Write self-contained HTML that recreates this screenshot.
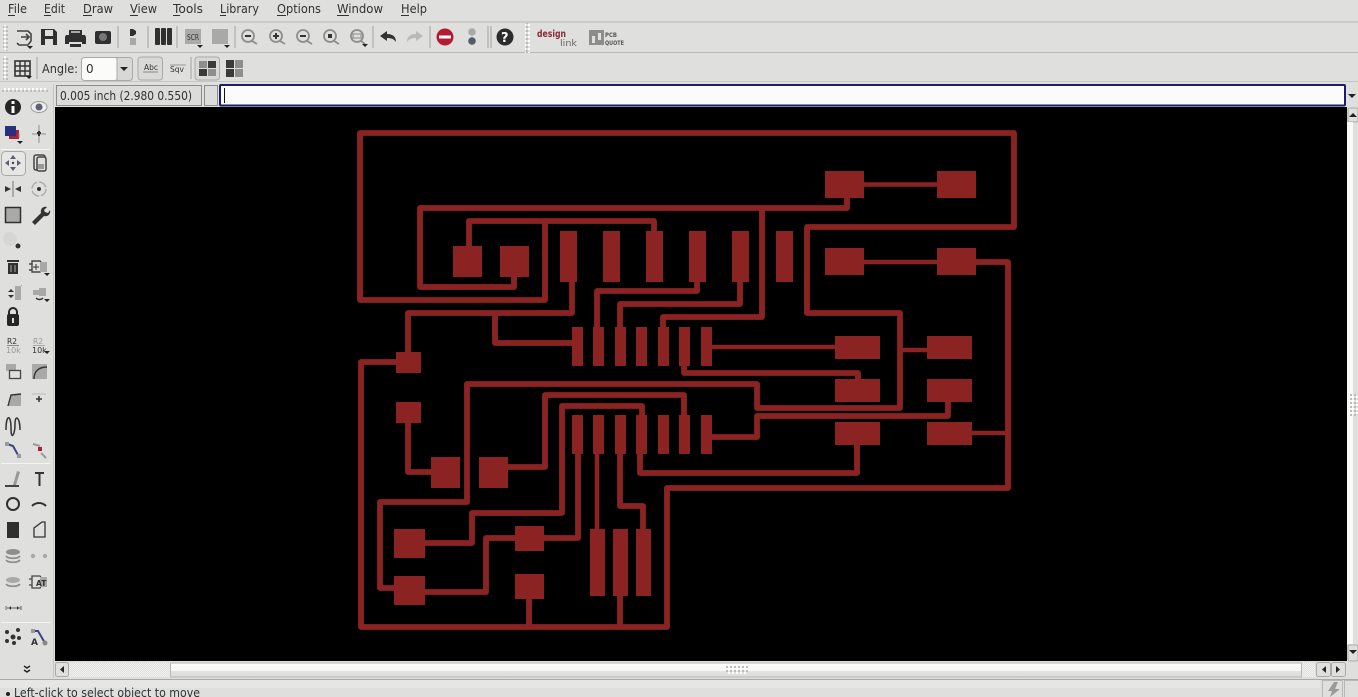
<!DOCTYPE html>
<html><head><meta charset="utf-8"><style>
html,body{margin:0;padding:0;width:1358px;height:697px;overflow:hidden;background:#dfe0de}
svg{display:block;position:absolute;left:0;top:0}
text{font-family:"DejaVu Sans",sans-serif;fill:#2f3133}
.m{font-size:12px}
.t{fill:none;stroke:#8b2323;stroke-width:5.8;stroke-linejoin:round}
.n{fill:none;stroke:#8b2323;stroke-width:4.6}
.p{fill:#8b2323}
.k{fill:#303030}
.g{fill:#a9aaa8}
.s{stroke:#b7b8b6;stroke-width:1.5}
.l{fill:none;stroke:#303030;stroke-width:2}
</style></head><body>
<svg width="1358" height="697" viewBox="0 0 1358 697" xmlns="http://www.w3.org/2000/svg">
<defs>
<pattern id="d" width="4" height="4" patternUnits="userSpaceOnUse"><rect width="2" height="2" fill="#fff"/><rect x="2" y="2" width="2" height="2" fill="#bdbebc"/></pattern>
<pattern id="e" width="2" height="2" patternUnits="userSpaceOnUse"><rect width="2" height="2" fill="#dfe0de"/><rect width="1" height="1" fill="#f2f3f1"/><rect x="1" y="1" width="1" height="1" fill="#f2f3f1"/></pattern>
<linearGradient id="sl" x1="0" y1="0" x2="0" y2="1"><stop offset="0" stop-color="#fcfdfb"/><stop offset=".55" stop-color="#f6f7f5"/><stop offset=".6" stop-color="#e2e3e1"/><stop offset="1" stop-color="#dcdddb"/></linearGradient>
</defs>
<rect width="1358" height="697" fill="#dfe0de"/>

<!-- menu -->
<g class="m">
<text x="8" y="13" class="m" textLength="19" lengthAdjust="spacingAndGlyphs">File</text><rect x="8" y="15" width="7" height="1" fill="#2f3133"/>
<text x="44" y="13" class="m" textLength="21" lengthAdjust="spacingAndGlyphs">Edit</text><rect x="44" y="15" width="7" height="1" fill="#2f3133"/>
<text x="83" y="13" class="m" textLength="30" lengthAdjust="spacingAndGlyphs">Draw</text><rect x="83" y="15" width="9" height="1" fill="#2f3133"/>
<text x="130" y="13" class="m" textLength="27" lengthAdjust="spacingAndGlyphs">View</text><rect x="130" y="15" width="8" height="1" fill="#2f3133"/>
<text x="173" y="13" class="m" textLength="30" lengthAdjust="spacingAndGlyphs">Tools</text><rect x="173" y="15" width="7" height="1" fill="#2f3133"/>
<text x="220" y="13" class="m" textLength="39" lengthAdjust="spacingAndGlyphs">Library</text><rect x="220" y="15" width="6" height="1" fill="#2f3133"/>
<text x="277" y="13" class="m" textLength="44" lengthAdjust="spacingAndGlyphs">Options</text><rect x="277" y="15" width="9" height="1" fill="#2f3133"/>
<text x="337" y="13" class="m" textLength="46" lengthAdjust="spacingAndGlyphs">Window</text><rect x="337" y="15" width="12" height="1" fill="#2f3133"/>
<text x="401" y="13" class="m" textLength="26" lengthAdjust="spacingAndGlyphs">Help</text><rect x="401" y="15" width="8" height="1" fill="#2f3133"/>
</g>

<!-- toolbars -->
<rect x="0" y="21.5" width="1358" height="1" fill="#b7b8b6"/>
<rect x="0" y="52" width="1358" height="1" fill="#b7b8b6"/>
<rect x="0" y="81" width="1358" height="1" fill="#c6c7c5"/>
<rect x="3" y="25" width="5" height="26" fill="url(#d)"/>
<rect x="3" y="56" width="5" height="24" fill="url(#d)"/>
<rect x="525" y="23" width="5" height="30" fill="url(#d)"/>
<rect x="2" y="88" width="46" height="4" fill="url(#d)"/>
<g class="s">
<line x1="118" y1="26" x2="118" y2="48"/><line x1="148" y1="26" x2="148" y2="48"/><line x1="177" y1="26" x2="177" y2="48"/><line x1="235" y1="26" x2="235" y2="48"/><line x1="373" y1="26" x2="373" y2="48"/><line x1="430" y1="26" x2="430" y2="48"/><line x1="488" y1="26" x2="488" y2="48"/><line x1="491" y1="26" x2="491" y2="48"/>
<line x1="37" y1="57" x2="37" y2="79"/><line x1="191" y1="57" x2="191" y2="79"/>
</g>

<!-- top icons -->
<path d="M17 31h11l3 3v7l-3 4H19l-2-2M21 37h8M26 34l3 3-3 3" fill="none" stroke="#444" stroke-width="1.6"/>
<path d="M27 46h6l-3 3z" fill="#222"/>
<path class="k" d="M41 29h13l3 3v13H41zM45 30v6h8v-6zM45 39v6h8v-6z"/>
<path class="k" d="M69 35v-5h13v5h3l1 2v7h-4v-2H69v2h-4v-7l1-2z"/><rect x="71" y="31" width="9" height="2" fill="#aaa"/><rect x="70" y="44" width="11" height="3" class="k"/>
<rect x="95" y="31" width="16" height="13" rx="2" class="k"/><circle cx="103" cy="37" r="4" fill="#777"/>
<path d="M130 29h3l3 2v3l-3 2h-3z" class="k"/><rect x="130" y="38" width="6" height="7" class="g"/>
<g class="k"><rect x="155" y="28" width="5" height="17" rx="1"/><rect x="161" y="28" width="5" height="17" rx="1"/><rect x="167" y="28" width="5" height="17" rx="1"/></g>
<rect x="185" y="29" width="16" height="15" class="g"/><text x="187" y="40" font-size="8" style="fill:#333" textLength="12" lengthAdjust="spacingAndGlyphs">SCR</text><path d="M197 45h6l-3 3z" fill="#222"/>
<rect x="212" y="29" width="16" height="15" class="g"/><path d="M224 45h6l-3 3z" fill="#222"/>
<g fill="none" stroke="#8d8e8c" stroke-width="1.8">
<circle cx="248" cy="36" r="6"/><line x1="252" y1="41" x2="257" y2="44"/>
<circle cx="276" cy="36" r="6"/><line x1="280" y1="41" x2="285" y2="44"/>
<circle cx="303" cy="36" r="6"/><line x1="307" y1="41" x2="312" y2="44"/>
<circle cx="330" cy="36" r="6"/><line x1="334" y1="41" x2="339" y2="44"/>
<circle cx="357" cy="36" r="6"/><line x1="361" y1="41" x2="365" y2="44"/>
</g>
<rect x="245" y="35" width="6" height="2" fill="#333"/>
<path d="M273 35h2v-2h2v2h2v2h-2v2h-2v-2h-2z" fill="#333"/>
<rect x="300" y="35" width="6" height="2" fill="#333"/>
<rect x="328" y="34" width="4" height="4" fill="#333"/>
<rect x="353" y="34" width="8" height="4" fill="none" stroke="#888"/><path d="M362 44h6l-3 3z" fill="#222"/>
<path d="M380 36l7-5v3c5 0 9 2 9 8-2-3-5-4-9-4v3z" fill="#333"/>
<path d="M423 36l-7-5v3c-5 0-9 2-9 8 2-3 5-4 9-4v3z" fill="#b9bab8"/>
<circle cx="445" cy="37" r="8.5" fill="#b51a30"/><rect x="439" y="35.5" width="12" height="3" fill="#fff"/>
<circle cx="472" cy="32" r="3.8" fill="#a9aaa8"/><circle cx="472" cy="41" r="3.8" fill="#555a66"/>
<circle cx="505" cy="37" r="8.5" fill="#2c2c2c"/><text x="501" y="42" font-size="13" font-weight="bold" style="fill:#fff">?</text>
<text x="537" y="37" font-size="9.5" font-weight="bold" style="fill:#8b2a33" textLength="29" lengthAdjust="spacingAndGlyphs">design</text>
<text x="560" y="46" font-size="9" style="fill:#666" textLength="17" lengthAdjust="spacingAndGlyphs">link</text>
<rect x="589" y="30" width="15" height="15" fill="#8d8e8c"/><rect x="592" y="36" width="3" height="7" fill="#dfe0de"/><rect x="598" y="33" width="3" height="7" fill="#dfe0de"/>
<text x="605" y="37" font-size="6.5" font-weight="bold" style="fill:#555" textLength="12" lengthAdjust="spacingAndGlyphs">PCB</text>
<text x="605" y="45" font-size="6.5" font-weight="bold" style="fill:#555" textLength="19" lengthAdjust="spacingAndGlyphs">QUOTE</text>

<!-- second row -->
<rect x="15" y="61" width="15" height="15" fill="none" stroke="#333" stroke-width="1.6"/>
<path d="M20 61v15M25 61v15M15 66h15M15 71h15" stroke="#333" stroke-width="1.4"/><path d="M26 76h6l-3 3z" fill="#222"/>
<text x="42" y="73" class="m" textLength="36" lengthAdjust="spacingAndGlyphs">Angle:</text>
<rect x="81.500" y="57.500" width="51" height="23" rx="3" fill="#d8d9d7" stroke="#aaaba9"/>
<rect x="82" y="58" width="35" height="22" rx="3" fill="#fbfcfa"/>
<line x1="117" y1="58" x2="117" y2="80" stroke="#aaaba9"/>
<text x="86" y="73" class="m">0</text>
<path d="M120 67h8l-4 4z" fill="#222"/>
<rect x="138" y="57" width="24.500" height="23" rx="3" fill="#d9dad8" stroke="#a9aaa8"/>
<text x="144" y="70" font-size="8" textLength="14" lengthAdjust="spacingAndGlyphs">Abc</text><line x1="143" y1="72" x2="158" y2="72" stroke="#888"/>
<line x1="170" y1="65" x2="186" y2="65" stroke="#999"/>
<text x="170" y="72" font-size="8" textLength="14" lengthAdjust="spacingAndGlyphs">Sqv</text>
<rect x="195" y="57" width="24.500" height="23" rx="3" fill="#d9dad8" stroke="#a9aaa8"/>
<g fill="#8e8f8d"><rect x="199" y="61" width="8" height="7"/><rect x="208" y="69" width="8" height="7"/></g>
<g fill="#3a3a3a"><rect x="208" y="61" width="8" height="7"/><rect x="199" y="69" width="8" height="7"/></g>
<g fill="#3a3a3a"><rect x="226" y="60" width="8" height="8"/><rect x="226" y="69" width="8" height="8"/></g>
<g fill="#8e8f8d"><rect x="235" y="60" width="8" height="8"/><rect x="235" y="69" width="8" height="8"/></g>

<!-- coord row -->
<rect x="56.500" y="85.500" width="145" height="20" fill="#dcdddb" stroke="#8e8f8d"/>
<text x="60" y="100" font-size="12" textLength="132" lengthAdjust="spacingAndGlyphs">0.005 inch (2.980 0.550)</text>
<rect x="204.500" y="85.500" width="13" height="20" fill="#dcdddb" stroke="#8e8f8d"/>
<rect x="220" y="85" width="1125" height="20.500" rx="1" fill="#fbfcfa" stroke="#1f1a6b" stroke-width="2"/>
<rect x="224" y="88" width="1" height="15" fill="#111"/>
<path d="M1348 94h8l-4 4z" fill="#222"/>

<!-- canvas -->
<rect x="55" y="107" width="1292" height="554" fill="#000"/>

<!-- traces -->
<g class="t">
<path d="M545 221V300H360V133H1014V227H807V313H900V408H757V384H467V502H380V588H395"/>
<path d="M545 221H469V246M469 221H654V235"/>
<path d="M847 198V208H420V287H514V275"/>
<path d="M762 208V317H663V328"/>
<path d="M597 328V291H697V280"/>
<path d="M620 328V304H740V280"/>
<path d="M572 280V313H408V355"/>
<path d="M495 313V343H575"/>
<path d="M400 362H361V627H667V488H1008V262H975"/>
<path d="M684 364V373H858V381"/>
<path d="M948 401V416H757V437H710"/>
<path d="M857 444V473H640V452"/>
<path d="M684 416V395H545V467H506"/>
<path d="M642 416V406H562V513H472V543H424"/>
<path d="M408 421V472H432"/>
<path d="M578 452V538H486V592H424"/>
<path d="M529 598V627"/>
<path d="M620 595V627"/>
<path d="M620 452V506H643V530"/>
<path d="M900 350H928" stroke-width="4.400"/>
<path d="M972 433H1008" stroke-width="4.400"/>
</g>
<g class="n">
<path d="M863 184.500H938"/><path d="M863 262H938"/><path d="M710 347H836"/><path d="M597 452V530"/>
</g>
<g class="p">
<rect x="825" y="171" width="39" height="27"/><rect x="937" y="171" width="39" height="27"/>
<rect x="825" y="248" width="39" height="27"/><rect x="937" y="248" width="39" height="27"/>
<rect x="835" y="336" width="45" height="23"/><rect x="927" y="336" width="45" height="23"/>
<rect x="835" y="379" width="45" height="23"/><rect x="927" y="379" width="45" height="23"/>
<rect x="835" y="422" width="45" height="23"/><rect x="927" y="422" width="45" height="23"/>
<rect x="560" y="231" width="17" height="51"/><rect x="603" y="231" width="17" height="51"/><rect x="646" y="231" width="17" height="51"/><rect x="689" y="231" width="17" height="51"/><rect x="732" y="231" width="17" height="51"/><rect x="776" y="231" width="17" height="51"/>
<rect x="453" y="246" width="29" height="31"/><rect x="500" y="246" width="29" height="31"/>
<rect x="572" y="327" width="11" height="39"/><rect x="593" y="327" width="11" height="39"/><rect x="615" y="327" width="11" height="39"/><rect x="636" y="327" width="11" height="39"/><rect x="658" y="327" width="11" height="39"/><rect x="679" y="327" width="11" height="39"/><rect x="701" y="327" width="11" height="39"/>
<rect x="572" y="415" width="11" height="39"/><rect x="593" y="415" width="11" height="39"/><rect x="615" y="415" width="11" height="39"/><rect x="636" y="415" width="11" height="39"/><rect x="658" y="415" width="11" height="39"/><rect x="679" y="415" width="11" height="39"/><rect x="701" y="415" width="11" height="39"/>
<rect x="396" y="352" width="25" height="21"/><rect x="396" y="402" width="25" height="21"/>
<rect x="431" y="457" width="29" height="31"/><rect x="479" y="457" width="29" height="31"/>
<rect x="394" y="529" width="31" height="29"/><rect x="394" y="576" width="31" height="29"/>
<rect x="515" y="526" width="29" height="25"/><rect x="515" y="574" width="29" height="25"/>
<rect x="590" y="529" width="15" height="67"/><rect x="613" y="529" width="15" height="67"/><rect x="636" y="529" width="15" height="67"/>
</g>

<!-- left toolbar -->
<rect x="53" y="84" width="1" height="594" fill="#c6c7c5"/>
<circle cx="13" cy="107" r="8" fill="#262626"/><rect x="11.500" y="106" width="3" height="7" fill="#fff"/><rect x="11.500" y="101" width="3" height="3" fill="#fff"/>
<ellipse cx="39" cy="107" rx="8" ry="5.500" fill="#eee" stroke="#999"/><circle cx="39" cy="107" r="3.500" fill="#5c6070"/>
<rect x="5" y="126" width="11" height="10" fill="#28307e"/><path d="M9 136h7v-6h3v9H9z" fill="#b01f35"/><path d="M17 141h6l-3 3z" fill="#222"/><path d="M19 133v5" stroke="#888"/>
<path d="M39 125v18M32 134h14" stroke="#a9aaa8" stroke-width="1.500"/><path d="M37 133h4M39 131v5" stroke="#333" stroke-width="2"/>
<rect x="1" y="149" width="49" height="1" fill="#f4f5f3"/>
<rect x="1.500" y="151.500" width="24" height="24" rx="4" fill="#e6e7e5" stroke="#a9aaa8"/>
<g fill="#5a5e70"><path d="M13 155l3 4h-6z"/><path d="M13 171l3-4h-6z"/><path d="M5 163l4-3v6z"/><path d="M21 163l-4-3v6z"/></g><circle cx="13" cy="163" r="1.200" fill="#444"/>
<rect x="34" y="155" width="11" height="15" rx="2" fill="#dfe0de" stroke="#444" stroke-width="1.500"/><rect x="37" y="157" width="9" height="14" rx="2" fill="#dfe0de" stroke="#444" stroke-width="1.500"/><rect x="38" y="164" width="6" height="5" fill="#999"/>
<path d="M5 186l6 3-6 3zM21 186l-6 3 6 3z" fill="#333"/><rect x="12" y="181" width="2" height="16" fill="#aaa"/>
<circle cx="39" cy="189" r="7" fill="none" stroke="#aaa" stroke-width="1.400" stroke-dasharray="9 2"/><circle cx="39" cy="189" r="2" fill="#333"/>
<rect x="5.500" y="207.500" width="15" height="15" class="g" stroke="#303030" stroke-width="1.500"/>
<path d="M32 222l9-9c-1-4 2-7 6-6l-3 3 1 2 3 1 2-3c1 4-2 7-6 6l-9 9z" fill="#333"/>
<circle cx="10" cy="239" r="7" fill="#d6d7d5"/><circle cx="18" cy="246" r="2.500" fill="#303030"/>
<path d="M7 260h12v2H7zM8 263h10v11H8z" class="k"/><path d="M11 265v7M15 265v7" stroke="#aaa"/>
<path d="M32 261h8l4 5-4 6h-8zM29 264h3M29 270h3" fill="#dfe0de" stroke="#444" stroke-width="1.400"/><rect x="40" y="262" width="7" height="10" fill="#a9aaa8"/><path d="M36 264v6M33 267h6" stroke="#333"/><path d="M44 273h6l-3 3z" fill="#222"/>
<path d="M8 292l3-3 3 3zM8 295l3 3 3-3z" fill="#333"/><rect x="15" y="286" width="6" height="14" class="g"/><rect x="21" y="285" width="1" height="1" fill="#aaa"/>
<rect x="33" y="290" width="6" height="5" class="g"/><rect x="39" y="288" width="7" height="8" class="g"/><path d="M36 298c2 2 5 2 7 0" fill="none" stroke="#333" stroke-width="1.400"/><path d="M44 299h6l-3 3z" fill="#222"/>
<path d="M9 315v-3a4 4 0 0 1 8 0v3" fill="none" stroke="#262626" stroke-width="2"/><rect x="7" y="314" width="12" height="12" rx="2" fill="#262626"/><rect x="12" y="318" width="2" height="5" fill="#ddd"/>
<text x="7" y="344" font-size="7.500">R2</text><rect x="7" y="345" width="12" height="1" fill="#888"/><text x="6" y="353" font-size="8" style="fill:#999">10k</text>
<text x="33" y="344" font-size="7.500" style="fill:#999">R2</text><rect x="33" y="345" width="12" height="1" fill="#aaa"/><text x="32" y="353" font-size="8">10k</text><path d="M44 351h6l-3 3z" fill="#222"/>
<rect x="6" y="364" width="10" height="7" class="g"/><rect x="9.500" y="370.500" width="11" height="8" fill="#dfe0de" stroke="#444" stroke-width="1.300"/>
<rect x="32" y="364" width="15" height="15" class="g"/><path d="M34 379c0-8 5-12 13-12" fill="none" stroke="#333" stroke-width="1.400"/>
<path d="M8 406l3-11 10-1v12z" fill="#a9aaa8"/><path d="M8 406l3-11 10-1" fill="none" stroke="#333" stroke-width="1.400"/>
<path d="M32 394h14" stroke="#bbb"/><path d="M39 396v6M36 399h6" stroke="#333" stroke-width="1.500"/>
<path d="M6 430c0-16 5-16 5-2s4 6 4-4 5-7 5 6" fill="none" stroke="#333" stroke-width="1.500"/>
<path d="M7 444l6 2 5 9" fill="none" stroke="#3d4488" stroke-width="2"/><rect x="5" y="442" width="4" height="4" fill="#999"/><rect x="17" y="454" width="4" height="4" fill="#999"/>
<path d="M33 444l7 2M41 453l5 5" fill="none" stroke="#999" stroke-width="2"/><rect x="38" y="447" width="4" height="4" fill="#b01f35"/>
<rect x="1" y="463" width="49" height="1" fill="#f4f5f3"/>
<path d="M17 471l3 1-4 13h-3z" fill="#999"/><rect x="5" y="485" width="14" height="2" fill="#444"/>
<path d="M35 472h9v2h-3.500v12h-2v-12H35z" fill="#333"/>
<circle cx="13" cy="504" r="6" fill="none" stroke="#303030" stroke-width="2"/>
<path d="M32 506c4-4 10-4 14 0" class="l"/>
<rect x="7" y="522" width="12" height="16" class="k"/>
<path d="M34 537v-9l8-6h3v15z" fill="none" stroke="#333" stroke-width="1.300"/>
<ellipse cx="13" cy="552" rx="7" ry="3" fill="#8e8f8d"/><path d="M6 556c2 3 12 3 14 0M6 560c2 3 12 3 14 0" fill="none" stroke="#8e8f8d" stroke-width="1.800"/>
<circle cx="33" cy="556" r="2.200" fill="#a9aaa8"/><circle cx="45" cy="556" r="2.200" fill="#a9aaa8"/>
<ellipse cx="13" cy="580" rx="7" ry="3" fill="#a9aaa8"/><path d="M6 584c2 3 12 3 14 0" fill="none" stroke="#8e8f8d" stroke-width="1.800"/>
<path d="M32 576h8l4 6-4 6h-8zM29 579h3M29 585h3" fill="#dfe0de" stroke="#444" stroke-width="1.300"/><rect x="40" y="577" width="7" height="10" fill="#a9aaa8"/><text x="36" y="586" font-size="7.500" font-weight="bold">AT</text>
<path d="M7 608h14M6 606v4M21 606v4" stroke="#777" stroke-width="1.200"/><path d="M9 608l2-2v4zM19 608l-2-2v4z" fill="#333"/>
<rect x="1" y="622" width="49" height="1" fill="#f4f5f3"/>
<g fill="#333"><circle cx="13" cy="637" r="2.500"/><circle cx="7" cy="632" r="2"/><circle cx="18" cy="630" r="2"/><circle cx="19" cy="638" r="2"/><circle cx="7" cy="641" r="2"/><circle cx="14" cy="643" r="2"/></g>
<path d="M33 631h5l7 12" fill="none" stroke="#3d4488" stroke-width="2"/><rect x="31" y="629" width="4" height="4" fill="#999"/><circle cx="45" cy="643" r="2.500" fill="#888"/><text x="31" y="645" font-size="9" font-weight="bold">A</text>
<path d="M24 666l3 2 3-2M24 670l3 2 3-2" fill="none" stroke="#222" stroke-width="1.400"/>

<!-- scrollbars -->
<rect x="1347" y="107" width="11" height="555" fill="#dfe0de"/>
<rect x="1348" y="108" width="10" height="14" rx="2" fill="#dfe0de" stroke="#aaaba9"/>
<path d="M1349 117h8l-4-4z" fill="#222"/>
<rect x="1347" y="122" width="6" height="522" fill="#f9faf8"/>
<rect x="1350" y="394" width="8" height="22" fill="url(#d)"/>
<rect x="1348" y="645" width="10" height="16" rx="2" fill="#dfe0de" stroke="#aaaba9"/>
<path d="M1349 650h8l-4 4z" fill="#222"/>
<rect x="55" y="662" width="1291" height="16" fill="#dfe0de"/>
<rect x="55.500" y="662.500" width="13" height="14" rx="2" fill="#dfe0de" stroke="#aaaba9"/>
<path d="M64 666v7l-4-3.500z" fill="#222"/>
<rect x="69" y="663" width="101" height="14" fill="url(#e)"/>
<rect x="170.500" y="663" width="1131" height="14" fill="url(#sl)" stroke="#b7b8b6"/>
<rect x="726" y="665" width="22" height="9" fill="url(#d)"/>
<rect x="1302" y="663" width="13" height="14" fill="url(#e)"/>
<rect x="1316.500" y="662.500" width="14" height="14" rx="2" fill="#dfe0de" stroke="#aaaba9"/>
<rect x="1331.500" y="662.500" width="14" height="14" rx="2" fill="#dfe0de" stroke="#aaaba9"/>
<path d="M1326 666v7l-4-3.500z" fill="#222"/><path d="M1336 666v7l4-3.500z" fill="#222"/>

<!-- status -->
<rect x="0" y="679" width="1358" height="1" fill="#a9aaa8"/>
<rect x="0" y="680" width="1320" height="8" fill="#e6e7e5"/>
<rect x="1322.500" y="680.500" width="20" height="18" fill="#dfe0de" stroke="#b7b8b6"/>
<rect x="1344.500" y="680.500" width="14" height="18" fill="#dfe0de" stroke="#b7b8b6"/>
<path d="M1334 682l-6 9h4l-2 6 10-8h-5l3-7z" fill="#9a9b99"/>
<circle cx="8" cy="694" r="2" fill="#222"/>
<text x="14" y="697" font-size="12" textLength="186" lengthAdjust="spacingAndGlyphs">Left-click to select object to move</text>
</svg>
</body></html>
